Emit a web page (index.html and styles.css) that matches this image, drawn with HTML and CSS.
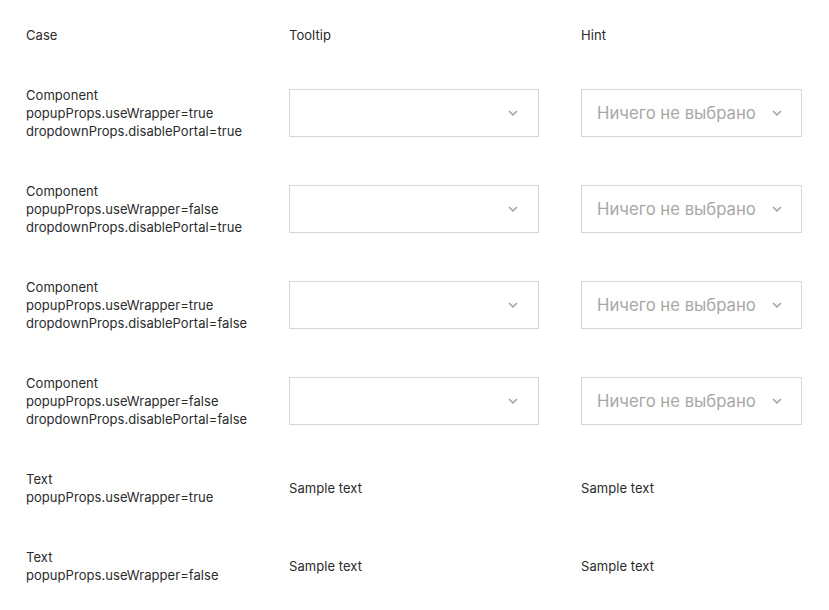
FILE: index.html
```html
<!DOCTYPE html>
<html>
<head>
<meta charset="utf-8">
<link rel="stylesheet" href="styles.css">
</head>
<body>
<div class="grid">
  <div class="cell">Case</div>
  <div class="cell">Tooltip</div>
  <div class="cell">Hint</div>

  <div class="cell">Component<br>popupProps.useWrapper=true<br>dropdownProps.disablePortal=true</div>
  <div class="cell"><div class="select wide"><span class="ph"></span><svg class="chev" width="10" height="6" viewBox="0 0 10 6"><path d="M1 1l4 4 4-4" fill="none" stroke="#9e9e9e" stroke-width="1.4"/></svg></div></div>
  <div class="cell"><div class="select"><span class="ph">Ничего не выбрано</span><svg class="chev" width="10" height="6" viewBox="0 0 10 6"><path d="M1 1l4 4 4-4" fill="none" stroke="#9e9e9e" stroke-width="1.4"/></svg></div></div>

  <div class="cell">Component<br>popupProps.useWrapper=false<br>dropdownProps.disablePortal=true</div>
  <div class="cell"><div class="select wide"><span class="ph"></span><svg class="chev" width="10" height="6" viewBox="0 0 10 6"><path d="M1 1l4 4 4-4" fill="none" stroke="#9e9e9e" stroke-width="1.4"/></svg></div></div>
  <div class="cell"><div class="select"><span class="ph">Ничего не выбрано</span><svg class="chev" width="10" height="6" viewBox="0 0 10 6"><path d="M1 1l4 4 4-4" fill="none" stroke="#9e9e9e" stroke-width="1.4"/></svg></div></div>

  <div class="cell">Component<br>popupProps.useWrapper=true<br>dropdownProps.disablePortal=false</div>
  <div class="cell"><div class="select wide"><span class="ph"></span><svg class="chev" width="10" height="6" viewBox="0 0 10 6"><path d="M1 1l4 4 4-4" fill="none" stroke="#9e9e9e" stroke-width="1.4"/></svg></div></div>
  <div class="cell"><div class="select"><span class="ph">Ничего не выбрано</span><svg class="chev" width="10" height="6" viewBox="0 0 10 6"><path d="M1 1l4 4 4-4" fill="none" stroke="#9e9e9e" stroke-width="1.4"/></svg></div></div>

  <div class="cell">Component<br>popupProps.useWrapper=false<br>dropdownProps.disablePortal=false</div>
  <div class="cell"><div class="select wide"><span class="ph"></span><svg class="chev" width="10" height="6" viewBox="0 0 10 6"><path d="M1 1l4 4 4-4" fill="none" stroke="#9e9e9e" stroke-width="1.4"/></svg></div></div>
  <div class="cell"><div class="select"><span class="ph">Ничего не выбрано</span><svg class="chev" width="10" height="6" viewBox="0 0 10 6"><path d="M1 1l4 4 4-4" fill="none" stroke="#9e9e9e" stroke-width="1.4"/></svg></div></div>

  <div class="cell">Text<br>popupProps.useWrapper=true</div>
  <div class="cell">Sample text</div>
  <div class="cell">Sample text</div>

  <div class="cell">Text<br>popupProps.useWrapper=false</div>
  <div class="cell">Sample text</div>
  <div class="cell">Sample text</div>
</div>
</body>
</html>
```
FILE: styles.css
```css
html, body {
  margin: 0;
  padding: 0;
  background: #fff;
}
body {
  font-family: Inter, "Noto Sans", sans-serif;
  font-size: 13px;
  line-height: 18px;
  color: #2b2b2b;
  letter-spacing: 0.05px;
}
.grid {
  display: grid;
  grid-template-columns: 221px 250px 221px;
  column-gap: 42px;
  row-gap: 42px;
  padding: 26px 0 0 26px;
  align-items: center;
}
.cell {
  min-width: 0;
}
.select {
  box-sizing: border-box;
  height: 48px;
  width: 221px;
  border: 1px solid #d6d6d6;
  display: flex;
  align-items: center;
  padding: 0 20px 0 15px;
  gap: 16px;
}
.select.wide {
  width: 250px;
}
.ph {
  flex: 1;
  font-size: 16.7px;
  letter-spacing: 0;
  color: #a8a8a8;
  white-space: nowrap;
}
.chev {
  flex: none;
}
```
